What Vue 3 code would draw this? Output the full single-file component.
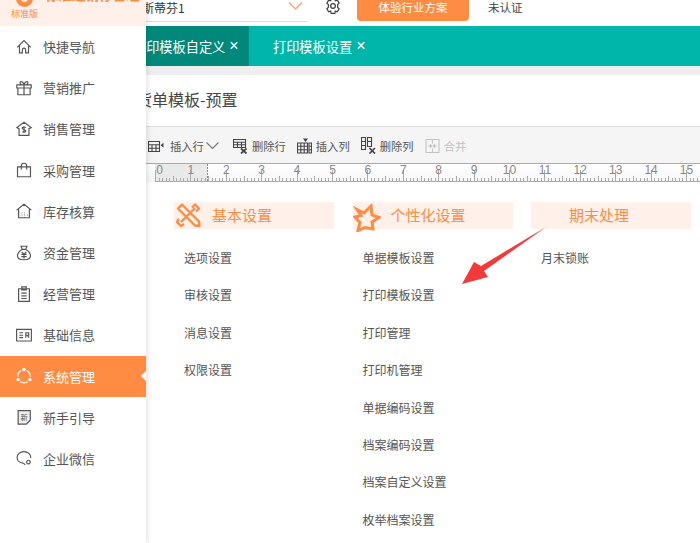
<script setup>
const nav = [
  { label: '快捷导航', d: 'M2.5 10.5 10 3l7.5 7.5M5 8.5V16.5h3.2v-3.5a1.8 1.8 0 0 1 3.6 0v3.5H15V8.5' },
  { label: '营销推广', d: 'M2 6.5h16v3.5H2zM3.2 10v7.5h13.6V10M10 6.5v11M10 6.5C7 6.5 5 5.500 5.800 3.500 6.800 1.800 9.500 3.500 10 6.500 10.500 3.500 13.200 1.800 14.200 3.500 15 5.500 13 6.500 10 6.500' },
  { label: '销售管理', d: 'M10 2.500 18 8.500l-2.500 1.200V17h-11V9.700L2 8.500zM12 8.500c-1-1-4-1-4 .8 0 1.800 4 1.300 4 3 0 1.700-3 1.500-4 .6M10 7v7.500' },
  { label: '采购管理', d: 'M2.800 6.500h14.400V17.500H2.800zM7 9.500V5.500a3 3 0 0 1 6 0v4' },
  { label: '库存核算', d: 'M1.800 9 10 2.500 18.200 9M4 7.800V17.500h12V7.800M7.500 12h.6M10.500 12h.6M7.500 14.500h.6M10.500 14.500h.6M13.500 14.500h.6M7.500 17h.6M10.500 17h.6' },
  { label: '资金管理', d: 'M6.800 2.500h6.400L12 6H8zM8 6C4.500 8 2.800 10.800 2.800 13c0 3.200 3.200 4.500 7.200 4.500s7.200-1.300 7.200-4.500C17.200 10.800 15.500 8 12 6M7.500 8.800 10 11.300l2.500-2.500M7 11.500h6M7 14h6M10 11.300V16' },
  { label: '经营管理', d: 'M4 4.200h12V18.200H4zM7.500 2h5v3.500h-5zM7 9h6M7 12h6M7 15h6' },
  { label: '基础信息', d: 'M1.800 3.800h16.400v12.900H1.800zM4.800 7.500H9M4.800 10.300H9M4.800 13H9M12 13V7.500h3.200v2.800H12M13.600 10.300 15.800 13' },
  { label: '系统管理', active: true, d: 'M7 3.800A7.300 7.300 0 0 0 3.200 11M5.800 16.200a7.300 7.300 0 0 0 8.400 0M16.800 11A7.300 7.300 0 0 0 13 3.800', dots: [[10, 2.800], [3.500, 14], [16.500, 14]] },
  { label: '新手引导', d: 'M3.500 3h13.500v10.500L12.500 18H3.500z', t: '新', muted: true },
  { label: '企业微信', d: 'M10 3C5.500 3 2.300 5.800 2.300 9.500c0 3.300 2.700 6 6.700 6.200M17.600 10C17.700 5.800 14.500 3 10 3M9 15.700l2.500 1.800M15 12.500a2 2 0 1 1-.1 0' }
]
const col1 = ['选项设置', '审核设置', '消息设置', '权限设置']
const col2 = ['单据模板设置', '打印模板设置', '打印管理', '打印机管理', '单据编码设置', '档案编码设置', '档案自定义设置', '枚举档案设置']
const col3 = ['月末锁账']

const unit = 35.4
const labels = Array.from({ length: 16 }, (_, i) => ({ n: i, x: 0.5 + unit * i + (i === 0 ? 4 : 0) }))
const ticks = Array.from({ length: 160 }, (_, i) => {
  const len = i % 10 === 0 ? 11 : i % 5 === 0 ? 5 : 3
  return { x: 0.5 + Math.round(i * unit / 10), y: 17 - len }
})
</script>

<template>
  <div class="page">
    <aside class="side">
      <div class="brand">
        <div class="logo-row">
          <span class="logo-dot"></span>
          <span class="brand-name">标准进销存管理</span>
        </div>
        <div class="edition">标准版</div>
      </div>
      <nav class="nav">
        <a v-for="item in nav" :key="item.label" class="nav-item" :class="{ active: item.active }">
          <span class="nav-icon">
            <svg width="18" height="18" viewBox="0 0 20 20" :fill="item.muted ? '#eeeeee' : 'none'" stroke="currentColor" stroke-width="1.300">
              <path :d="item.d" />
              <circle v-for="(p, i) in item.dots || []" :key="i" :cx="p[0]" :cy="p[1]" r="1.900" fill="currentColor" stroke="none" />
              <text v-if="item.t" x="10" y="13" class="icon-text" text-anchor="middle">{{ item.t }}</text>
            </svg>
          </span>
          <span>{{ item.label }}</span>
        </a>
      </nav>
    </aside>

    <main class="main">
      <header class="topbar">
        <div class="select">
          <span class="select-name">斯蒂芬1</span>
          <svg class="chev" width="15" height="8" viewBox="0 0 15 8" fill="none" stroke="#ff9a5c" stroke-width="1.200"><path d="M1 .5 7.500 7 14 .5" /></svg>
        </div>
        <svg class="gear" width="18" height="18" viewBox="0 0 20 20" fill="none" stroke="#444" stroke-width="1.400">
          <path d="M8 1.800h4l.6 2.400 2.200-.8 2 3.400-1.700 1.700v2.900l1.700 1.700-2 3.400-2.200-.8-.6 2.400H8l-.6-2.400-2.200.8-2-3.400 1.700-1.700V8.500L3.200 6.800l2-3.400 2.200.8z" />
          <circle cx="10" cy="10" r="2.600" />
        </svg>
        <button class="trial">体验行业方案</button>
        <span class="cert">未认证</span>
      </header>

      <div class="tabs">
        <div class="tab current"><span class="clip-tab">打印模板自定义</span><i>×</i></div>
        <div class="tab"><span>打印模板设置</span><i>×</i></div>
      </div>

      <div class="title-box"><h1>货单模板-预置</h1></div>

      <div class="toolbar">
        <div class="tool with-chev">
          <svg width="16" height="16" viewBox="0 0 16 16" fill="none" stroke="#444" stroke-width="1.100">
            <path d="M.5 3.500h11v10H.5zM.5 6.800h11M.5 10.200h11M4 6.800v6.700M8 6.800v6.700" /><path d="M15.500 4.800 12.500 7.300 15.500 9.500z" fill="#444" stroke="none" />
          </svg>
          <span class="tool-text">插入行</span>
          <svg class="tool-chev" width="13" height="7" viewBox="0 0 13 7" fill="none" stroke="#777" stroke-width="1.100"><path d="M.5.500 6.500 6.500 12.500.500" /></svg>
        </div>
        <div class="tool">
          <svg width="15" height="16" viewBox="0 0 15 16" fill="none" stroke="#444" stroke-width="1.100">
            <path d="M.5 1.500h12v8H.5zM.5 4.200h12M.5 6.800h12M4.500 4.200v5.300M8.500 4.200v5.300" /><path d="M8 10.500 13.500 15.500M13.500 10.500 8 15.500" stroke-width="1.700" />
          </svg>
          <span class="tool-text">删除行</span>
        </div>
        <div class="tool">
          <svg width="15" height="16" viewBox="0 0 15 16" fill="none" stroke="#444" stroke-width="1.100">
            <path d="M.5 5h10v10H.5zM3.800 5v10M7.200 5v10M.5 8.300h10M.5 11.700h10M12 5h2.500v10H12zM12 8.300h2.500M12 11.700h2.500" /><path d="M6 .500h5L8.500 4z" fill="#444" stroke="none" />
          </svg>
          <span class="tool-text">插入列</span>
        </div>
        <div class="tool">
          <svg width="15" height="17" viewBox="0 0 15 17" fill="none" stroke="#444" stroke-width="1.100">
            <path d="M.5.500h4v12h-4zM.5 4.500h4M.5 8.500h4M6.500.500h4v9h-4zM6.500 4.500h4" /><path d="M8.500 11 14 16.500M14 11 8.500 16.500" stroke-width="1.700" />
          </svg>
          <span class="tool-text">删除列</span>
        </div>
        <div class="tool disabled">
          <svg width="15" height="14" viewBox="0 0 15 14" fill="none" stroke="#c4c4c4" stroke-width="1.100">
            <path d="M1 .5h13v13H1zM7.500.5v4M7.500 9.500v4M3 7h3.500M5 5.500 6.800 7 5 8.500M12 7H8.500M10 5.500 8.200 7 10 8.500" />
          </svg>
          <span class="tool-text">合并</span>
        </div>
      </div>

      <div class="ruler">
        <svg width="545" height="18" class="ruler-svg">
          <rect x="0" y="0" width="52" height="18" fill="#e9e9e9" />
          <line x1="0" x2="545" y1="17.500" y2="17.500" stroke="#aaa" />
          <line v-for="t in ticks" :key="t.x" :x1="t.x" :x2="t.x" :y1="t.y" y2="17" stroke="#aaa" />
          <line x1="52.500" x2="52.500" y1="0" y2="18" stroke="#e0626c" stroke-dasharray="2 1" />
          <text v-for="l in labels" :key="l.n" :x="l.x" y="10" class="ruler-num" text-anchor="middle">{{ l.n }}</text>
        </svg>
      </div>

      <section class="settings">
        <div class="col">
          <div class="col-head">
            <svg class="head-icon" width="26" height="26" viewBox="0 0 26 26" fill="none" stroke="#ff8c42" stroke-width="2.400" stroke-linejoin="round">
              <path d="M3 6.500 7 2.500 24 19.500 24.500 24 20 23.500 3 6.500zM17 5.500l3-3 4 4-3 3M9 22l-3 2-4-4 2-3M20 6 6 20" />
            </svg>
            <span>基本设置</span>
          </div>
          <a v-for="t in col1" :key="t" class="link">{{ t }}</a>
        </div>
        <div class="col">
          <div class="col-head">
            <svg class="head-icon star" width="28" height="28" viewBox="0 0 28 28" fill="none" stroke="#ff8c42" stroke-width="3" stroke-linejoin="miter">
              <path d="M4 5.500 11 9l7-7 1 9 7 2.500-7 4.500 1 7-8-1.500-7 3 2-8L2 13l6-1.500z" />
            </svg>
            <span>个性化设置</span>
          </div>
          <a v-for="t in col2" :key="t" class="link">{{ t }}</a>
        </div>
        <div class="col">
          <div class="col-head"><span>期末处理</span></div>
          <a v-for="t in col3" :key="t" class="link">{{ t }}</a>
        </div>
      </section>
    </main>

    <svg class="arrow" width="90" height="62" viewBox="460 225 90 62">
      <polygon points="546,227 481,266 474,262 462,284 488,277 484,271" fill="#f23a3a" />
    </svg>
  </div>
</template>

<style scoped>
.page {
  position: relative;
  display: flex;
  width: 700px;
  height: 543px;
  overflow: hidden;
  background: #fff;
  font-family: "Noto Sans CJK SC", "Liberation Sans", sans-serif;
}
.side {
  position: relative;
  z-index: 2;
  flex: none;
  width: 146px;
  height: 543px;
  background: #fff;
  box-shadow: 2px 0 5px rgba(0, 0, 0, 0.1);
}
.brand {
  height: 26px;
  overflow: hidden;
  background: #fff1e9;
}
.logo-row {
  display: flex;
  align-items: flex-end;
  height: 7px;
  padding-left: 16px;
  gap: 12px;
}
.logo-dot {
  flex: none;
  width: 17px;
  height: 17px;
  border-radius: 50%;
  box-sizing: border-box;
  background: #fff1e9;
  border: 5px solid #ff8c42;
}
.brand-name {
  flex: none;
  margin-bottom: 5px;
  font-size: 13.500px;
  line-height: 16px;
  font-weight: 700;
  color: #ff8c42;
}
.edition {
  margin: 0 0 0 11px;
  font-size: 9px;
  line-height: 14px;
  font-weight: 500;
  color: #ff9a5c;
}
.nav-item {
  position: relative;
  display: flex;
  align-items: center;
  height: 41.200px;
  font-size: 13px;
  color: #555;
}
.nav-icon {
  display: flex;
  width: 43px;
  padding-left: 15px;
  box-sizing: border-box;
  color: #555;
}
.nav-item.active {
  background: #ff8c42;
  color: #fff;
}
.nav-item.active .nav-icon {
  color: #fff;
}
.nav-item.active::after {
  content: "";
  position: absolute;
  right: 0;
  top: 15px;
  border: 5.500px solid transparent;
  border-right-color: #fff;
  border-left-width: 0;
}
.icon-text {
  font-size: 8px;
  fill: currentColor;
  stroke: none;
}
.main {
  flex: 1;
  min-width: 0;
  overflow: hidden;
}
.topbar {
  display: flex;
  align-items: flex-start;
  height: 26px;
}
.select {
  position: relative;
  flex: none;
  display: flex;
  justify-content: space-between;
  width: 162px;
  height: 22px;
  box-sizing: border-box;
  border-bottom: 1px solid #ddd;
}
.select-name {
  margin-left: -4px;
  font-size: 12px;
  line-height: 16px;
  color: #333;
}
.chev {
  margin: 2px 5px 0 0;
}
.gear {
  flex: none;
  margin: -3px 0 0 16px;
}
.trial {
  flex: none;
  width: 112px;
  height: 21px;
  margin-left: 15px;
  padding: 0 0 7px;
  border: 0;
  border-radius: 0 0 4px 4px;
  background: #ff8c42;
  color: #fff;
  font: 11.500px/14px "Noto Sans CJK SC", sans-serif;
}
.cert {
  margin: -1px 0 0 19px;
  font-size: 11.500px;
  line-height: 16px;
  color: #444;
}
.tabs {
  display: flex;
  height: 40px;
  background: #00b5a9;
}
.tab {
  display: flex;
  align-items: center;
  padding: 0 0 0 24px;
  font-size: 13.200px;
  color: #fff;
}
.tab i {
  margin-left: 4px;
  font: normal 16px "Liberation Sans", sans-serif;
}
.tab.current {
  width: 103px;
  box-sizing: border-box;
  padding: 0;
  background: #00897b;
  white-space: nowrap;
  overflow: hidden;
}
.clip-tab {
  margin-left: -13px;
}
.title-box {
  height: 52px;
  margin-top: 9px;
  box-sizing: border-box;
  box-shadow: 0 -9px 0 #eee;
  border-bottom: 1px solid #ddd;
  background: #fff;
}
.title-box h1 {
  margin: 0 0 0 -10px;
  padding-top: 12px;
  font-size: 16px;
  line-height: 24px;
  font-weight: 400;
  color: #444;
}
.toolbar {
  display: flex;
  align-items: center;
  height: 37px;
  box-sizing: border-box;
  padding: 1px 0 0 2px;
  background: #f5f5f5;
  border-bottom: 1px solid #aaa;
}
.tool {
  display: flex;
  align-items: center;
  gap: 4px;
  margin-right: 11px;
  font-size: 11.300px;
  color: #555;
}
.tool.with-chev {
  margin-right: 14px;
}
.tool-text {
  white-space: nowrap;
}
.tool-chev {
  margin-left: -2px;
}
.with-chev .tool-text {
  margin-left: 2px;
}
.tool.disabled {
  color: #c0c0c0;
}
.ruler {
  height: 18px;
  padding-left: 9px;
  background: linear-gradient(#fff, #f6f6f6);
}
.ruler-svg {
  display: block;
}
.ruler-num {
  font-family: "Liberation Sans", sans-serif;
  font-size: 12px;
  fill: #888;
}
.settings {
  display: flex;
  gap: 18.500px;
  padding: 20px 0 0 28px;
}
.col {
  flex: none;
  width: 160px;
}
.col-head {
  position: relative;
  display: flex;
  align-items: center;
  height: 27px;
  margin-bottom: 10px;
  padding: 0 0 2px 38px;
  box-sizing: border-box;
  background: #fff1e9;
  font-size: 15px;
  color: #ff8c42;
}
.head-icon {
  position: absolute;
  left: 1px;
  top: 0;
}
.head-icon.star {
  left: 0;
  top: 2px;
}
.link {
  display: block;
  height: 37.400px;
  padding-left: 10px;
  font-size: 12px;
  line-height: 37.400px;
  color: #555;
  white-space: nowrap;
}
.arrow {
  position: absolute;
  left: 460px;
  top: 225px;
  z-index: 3;
}
</style>
